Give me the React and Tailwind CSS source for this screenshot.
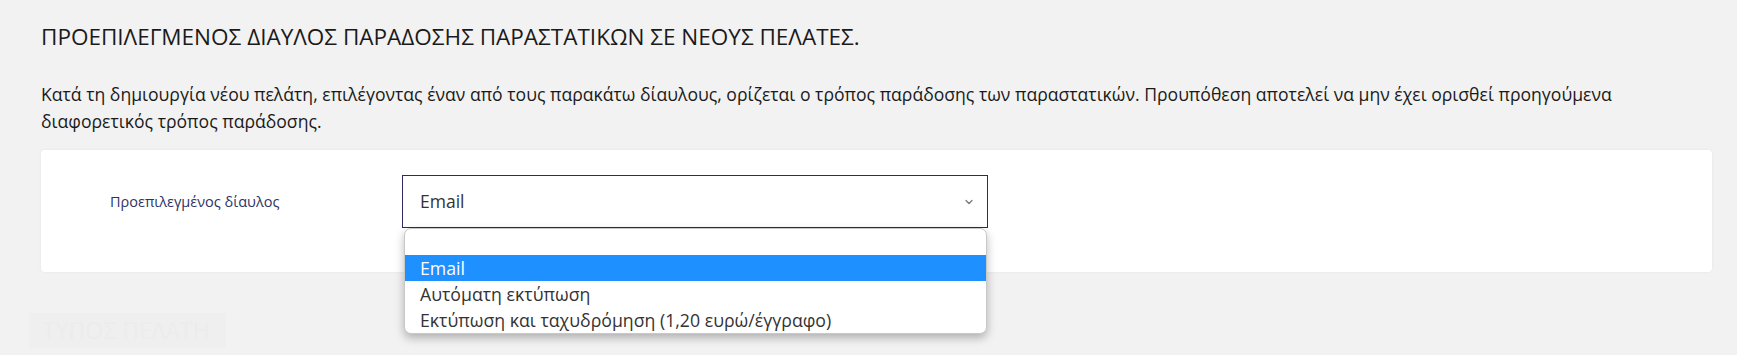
import { ChevronDown } from "lucide-react";

const OPTIONS = ["", "Email", "Αυτόματη εκτύπωση", "Εκτύπωση και ταχυδρόμηση (1,20 ευρώ/έγγραφο)"];

function ChannelSelect() {
  return (
    <div className="relative w-[586px]">
      <div className="flex h-[53px] items-center justify-between border border-[#2e2768] bg-white pl-[17px] pr-[12px] text-[17.5px] text-[#333]">
        <span>Email</span>
        <ChevronDown size={12} strokeWidth={2.5} className="text-[#777]" />
      </div>

      {/* open native list */}
      <ul className="absolute left-[2px] right-[1px] top-[53px] overflow-hidden rounded-[7px] border border-[#c8c8c8] bg-white text-[17.7px] text-[#333] shadow-[0_4px_10px_rgba(0,0,0,0.28)]">
        {OPTIONS.map((o, i) => (
          <li
            key={i}
            className={`h-[26px] pl-[15px] leading-[26px] ${o === "Email" ? "bg-[#1e90ff] text-white" : ""}`}
          >
            {o}
          </li>
        ))}
      </ul>
    </div>
  );
}

export default function App() {
  return (
    <div className="h-[355px] w-full overflow-hidden bg-[#f2f2f2] pl-[41px] pr-[25px] pt-[22px] font-['Open_Sans',sans-serif] text-[#1a1a1a]">
      <h1 className="text-[22.5px] leading-[30px]">
        ΠΡΟΕΠΙΛΕΓΜΕΝΟΣ ΔΙΑΥΛΟΣ ΠΑΡΑΔΟΣΗΣ ΠΑΡΑΣΤΑΤΙΚΩΝ ΣΕ ΝΕΟΥΣ ΠΕΛΑΤΕΣ.
      </h1>

      <p className="mt-[29px] max-w-[1600px] text-[17.6px] leading-[27px]">
        Κατά τη δημιουργία νέου πελάτη, επιλέγοντας έναν από τους παρακάτω δίαυλους, ορίζεται ο τρόπος παράδοσης των
        παραστατικών. Προυπόθεση αποτελεί να μην έχει ορισθεί προηγούμενα διαφορετικός τρόπος παράδοσης.
      </p>

      <div className="mt-[15px] flex h-[122px] items-start rounded-[4px] bg-white pt-[25px] shadow-[0_0_3px_rgba(0,0,0,0.06)]">
        <div className="flex h-[53px] w-[361px] items-center pl-[69px] text-[14.5px] text-[#2d3366]">
          Προεπιλεγμένος δίαυλος
        </div>
        <ChannelSelect />
      </div>

      <div className="-ml-[12px] mt-[41px] flex h-[35px] w-[197px] items-center bg-[#efefef] pl-[14px] text-[23px] text-[#ececec]">
        ΤΥΠΟΣ ΠΕΛΑΤΗ
      </div>
    </div>
  );
}
